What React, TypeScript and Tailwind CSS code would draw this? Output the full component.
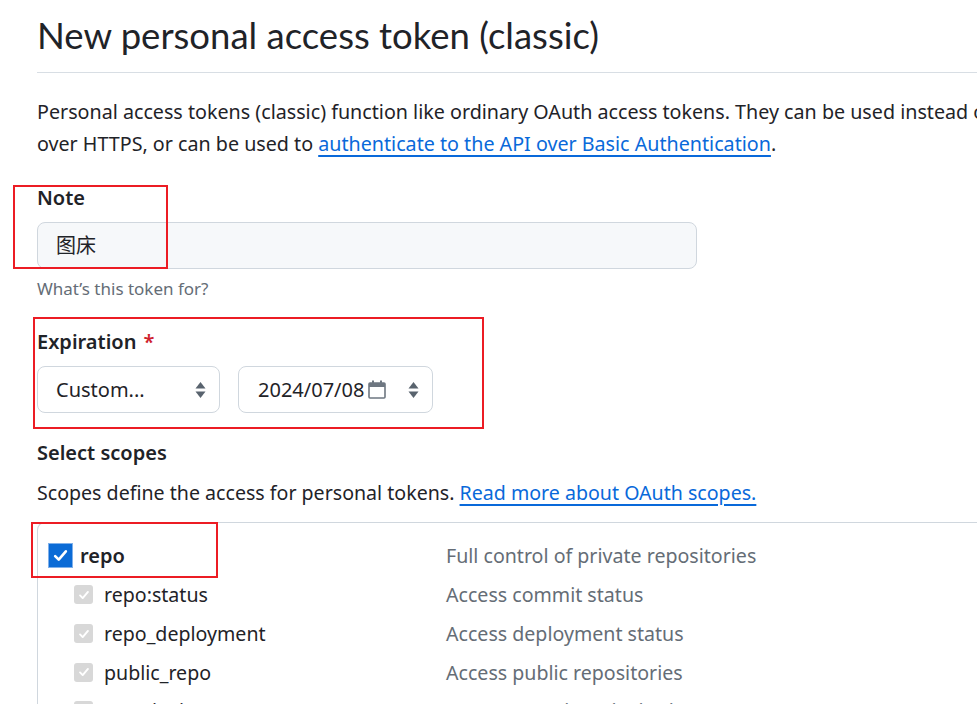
import React from "react";

const scopes = [
  { name: "repo:status", desc: "Access commit status" },
  { name: "repo_deployment", desc: "Access deployment status" },
  { name: "public_repo", desc: "Access public repositories" },
  { name: "repo:invite", desc: "Access repository invitations" },
];

const Check = ({ className }: { className?: string }) => (
  <svg viewBox="0 0 16 16" className={className} fill="none">
    <path d="M3.5 8.5l3 3 6-7" stroke="white" strokeWidth="2.2" strokeLinecap="round" strokeLinejoin="round" />
  </svg>
);

const Arrows = () => (
  <svg width="11" height="18" viewBox="0 0 11 18" className="shrink-0">
    <path d="M5.5 1L10.5 7.5H0.5Z" fill="#59636e" />
    <path d="M5.5 17L10.5 10.5H0.5Z" fill="#59636e" />
  </svg>
);

const Calendar = () => (
  <svg width="18" height="19" viewBox="0 0 18 19" className="shrink-0 ml-[4px]">
    <rect x="1" y="3" width="16" height="15" rx="1" fill="none" stroke="#6e7781" strokeWidth="1.6" />
    <rect x="1" y="3" width="16" height="4" fill="#6e7781" />
    <rect x="4" y="0.5" width="2" height="3.5" fill="#6e7781" />
    <rect x="12" y="0.5" width="2" height="3.5" fill="#6e7781" />
  </svg>
);

export default function App() {
  return (
    <div
      className="relative w-[977px] h-[704px] overflow-hidden bg-white text-[#1f2328]"
      style={{ fontFamily: '"Segoe UI", "Noto Sans", "Noto Sans CJK SC", sans-serif' }}
    >
      <div className="w-[1200px] pl-[37px]">
        <h1 className="pt-[10px] pb-[12px] text-[36.5px] leading-[50px] font-normal border-b border-[#d8dee4] font-['Lato',sans-serif]">
          New personal access token (classic)
        </h1>

        <p className="mt-[23px] text-[19.7px] leading-[32px] whitespace-nowrap">
          Personal access tokens (classic) function like ordinary OAuth access tokens. They can be used instead of passwords for Git
          <br />
          over HTTPS, or can be used to{" "}
          <a className="text-[#0969da] underline decoration-2 underline-offset-4">authenticate to the API over Basic Authentication</a>.
        </p>

        <div className="mt-[24px]">
          <label className="block text-[20px] leading-[28px] font-semibold">Note</label>
          <div className="mt-[10px] w-[660px] h-[47px] rounded-[8px] border border-[#d0d7de] bg-[#f6f8fa] flex items-center px-[18px] text-[20px]">
            图床
          </div>
          <div className="mt-[8px] text-[17px] leading-[24px] text-[#656d76]">What’s this token for?</div>
        </div>

        <div className="mt-[27px]">
          <label className="block text-[20px] leading-[28px] font-semibold">
            Expiration <span className="text-[#cf222e] ml-[2px]">*</span>
          </label>
          <div className="mt-[10px] flex gap-[18px]">
            <div className="w-[183px] h-[47px] rounded-[8px] border border-[#d0d7de] flex items-center justify-between pl-[18px] pr-[13px] text-[20px]">
              <span>Custom...</span>
              <Arrows />
            </div>
            <div className="w-[195px] h-[47px] rounded-[8px] border border-[#d0d7de] flex items-center pl-[19px] pr-[13px] text-[20px]">
              <span>2024/07/08</span>
              <Calendar />
              <span className="ml-auto">
                <Arrows />
              </span>
            </div>
          </div>
        </div>

        <div className="mt-[26px]">
          <h2 className="text-[20px] leading-[28px] font-semibold">Select scopes</h2>
          <p className="mt-[12px] text-[19.6px] leading-[28px]">
            Scopes define the access for personal tokens.{" "}
            <a className="text-[#0969da] underline decoration-2 underline-offset-4">Read more about OAuth scopes.</a>
          </p>
        </div>

        <div className="mt-[15px] border-t border-l border-[#d0d7de] rounded-tl-[8px] pb-[40px]">
          <div className="grid grid-cols-[408px_1fr] items-center h-[52.6px] pt-[13px]">
            <div className="flex items-center pl-[10px] gap-[7px]">
              <span className="w-[25px] h-[25px] bg-[#0b6bd6] flex items-center justify-center border border-[#7fb0ea]">
                <Check className="w-[19px] h-[19px]" />
              </span>
              <span className="text-[20px] font-semibold">repo</span>
            </div>
            <div className="text-[19.6px] text-[#656d76]">Full control of private repositories</div>
          </div>
          {scopes.map((s) => (
            <div key={s.name} className="grid grid-cols-[408px_1fr] items-center h-[38.7px]">
              <div className="flex items-center pl-[36px] gap-[11px]">
                <span className="w-[19px] h-[19px] rounded-[3px] bg-[#d8d8d8] flex items-center justify-center">
                  <Check className="w-[14px] h-[14px]" />
                </span>
                <span className="text-[19.6px]">{s.name}</span>
              </div>
              <div className="text-[19.6px] text-[#656d76]">{s.desc}</div>
            </div>
          ))}
        </div>
      </div>

      {/* red annotation boxes */}
      <div className="absolute left-[13px] top-[185px] w-[155px] h-[84px] border-2 border-[#ec1c24]" />
      <div className="absolute left-[33px] top-[317px] w-[451px] h-[112px] border-2 border-[#ec1c24]" />
      <div className="absolute left-[31px] top-[522px] w-[187px] h-[56px] border-2 border-[#ec1c24]" />
    </div>
  );
}
